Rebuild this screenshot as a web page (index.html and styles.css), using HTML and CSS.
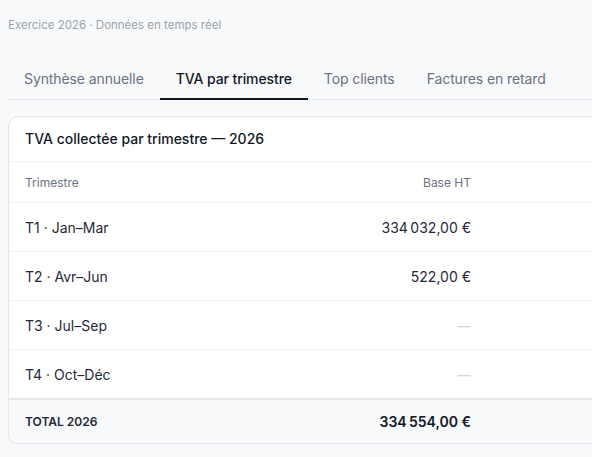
FILE: index.html
```html
<!DOCTYPE html>
<html lang="fr">
<head>
<meta charset="utf-8">
<link rel="stylesheet" href="styles.css">
</head>
<body>
<div class="page">
  <p class="subtitle">Exercice 2026 · Données en temps réel</p>
  <nav class="tabs">
    <span class="tab">Synthèse annuelle</span>
    <span class="tab active">TVA par trimestre</span>
    <span class="tab">Top clients</span>
    <span class="tab">Factures en retard</span>
  </nav>
  <section class="card">
    <h2 class="card-title">TVA collectée par trimestre — 2026</h2>
    <div class="table">
      <div class="row head">
        <span class="c1">Trimestre</span>
        <span class="c2">Base HT</span>
      </div>
      <div class="row">
        <span class="c1">T1 · Jan–Mar</span>
        <span class="c2">334&#8239;032,00&nbsp;€</span>
      </div>
      <div class="row">
        <span class="c1">T2 · Avr–Jun</span>
        <span class="c2">522,00&nbsp;€</span>
      </div>
      <div class="row">
        <span class="c1">T3 · Jul–Sep</span>
        <span class="c2 empty">—</span>
      </div>
      <div class="row last">
        <span class="c1">T4 · Oct–Déc</span>
        <span class="c2 empty">—</span>
      </div>
      <div class="row total">
        <span class="c1">TOTAL 2026</span>
        <span class="c2">334&#8239;554,00&nbsp;€</span>
      </div>
    </div>
  </section>
</div>
</body>
</html>
```
FILE: styles.css
```css
html, body {
  margin: 0;
  padding: 0;
  overflow: hidden;
  background: #f8f9fb;
}
body {
  font-family: Inter, "Noto Sans", sans-serif;
  color: #111827;
}
.page {
  width: 760px;
  padding: 17px 8px 0 8px;
}
.subtitle {
  margin: 0;
  font-size: 11.5px;
  line-height: 17px;
  color: #9ca3af;
}
.tabs {
  display: flex;
  margin-top: 25px;
  border-bottom: 1px solid #e5e7eb;
}
.tab {
  padding: 10px 16px 9px;
  font-size: 14px;
  line-height: 20px;
  letter-spacing: -0.1px;
  color: #6b7280;
  border-bottom: 2px solid transparent;
  margin-bottom: -1px;
}
.tab.active {
  color: #111827;
  font-weight: 500;
  border-bottom-color: #111827;
}
.card {
  margin-top: 16px;
  background: #fff;
  border: 1px solid #e5e7eb;
  border-radius: 10px;
  overflow: hidden;
  box-shadow: 0 1px 2px rgba(17, 24, 39, 0.04);
}
.card-title {
  margin: 0;
  padding: 12px 16px;
  font-size: 14px;
  line-height: 20px;
  font-weight: 500;
  color: #111827;
  border-bottom: 1px solid #f0f1f3;
}
.row {
  display: grid;
  grid-template-columns: 330px 148px 1fr;
  align-items: center;
  height: 48px;
  border-bottom: 1px solid #f1f2f4;
  font-size: 14px;
  color: #1f2937;
}
.row .c1 { padding-left: 16px; }
.row .c2 { padding-right: 16px; text-align: right; }
.row.head {
  height: 40px;
  font-size: 12px;
  color: #6b7280;
}
.c2.empty { color: #d1d5db; }
.row.last {
  border-bottom: 2px solid #e5e7eb;
}
.row.total {
  height: 43px;
  border-bottom: none;
  background: #f8f9fb;
}
.row.total .c1 {
  font-size: 12px;
  font-weight: 600;
  color: #1f2937;
}
.row.total .c2 {
  font-size: 14px;
  font-weight: 600;
  color: #111827;
}
```
